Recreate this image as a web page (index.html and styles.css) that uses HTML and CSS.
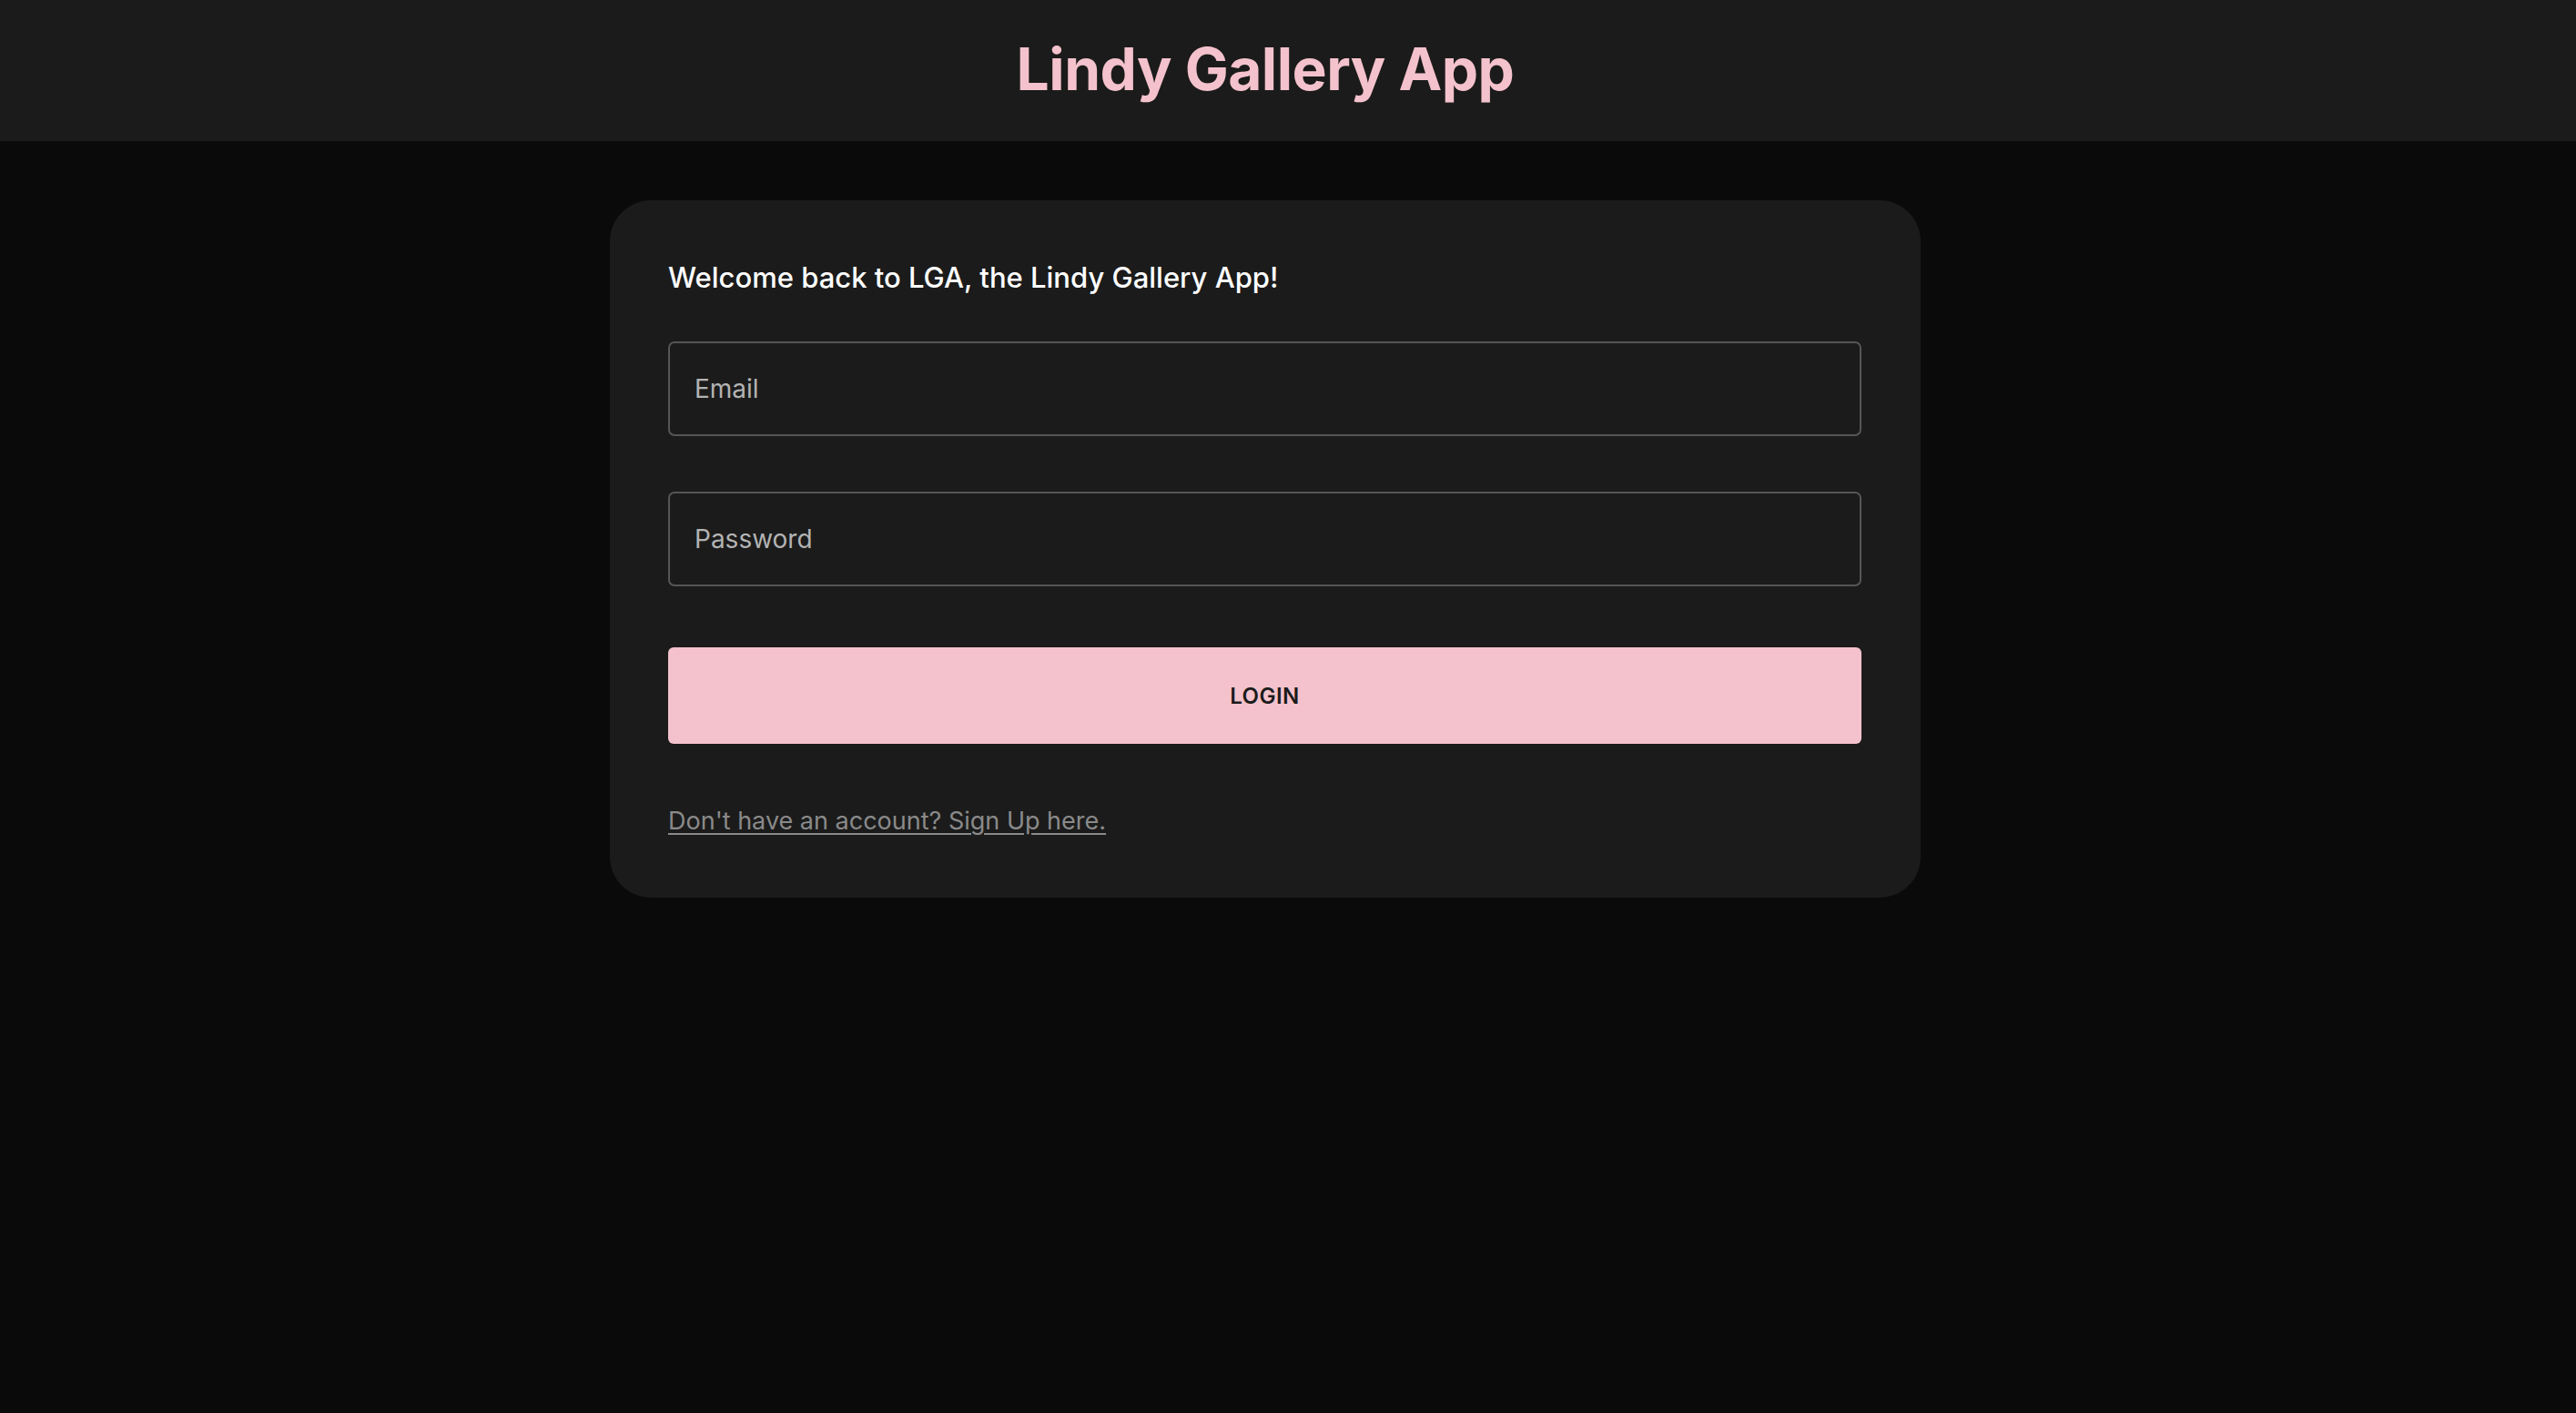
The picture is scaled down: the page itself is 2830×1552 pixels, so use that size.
FILE: index.html
```html
<!DOCTYPE html>
<html lang="en">
<head>
<meta charset="utf-8">
<title>Lindy Gallery App</title>
<link rel="stylesheet" href="styles.css">
</head>
<body>
<header class="topbar">
  <h1 class="app-title">Lindy Gallery App</h1>
</header>
<main class="main">
  <section class="card">
    <h2 class="welcome">Welcome back to LGA, the Lindy Gallery App!</h2>
    <form class="login-form">
      <input class="field" type="email" placeholder="Email">
      <input class="field" type="password" placeholder="Password">
      <button class="login-btn" type="button">LOGIN</button>
    </form>
    <a class="signup-link" href="#">Don't have an account? Sign Up here.</a>
  </section>
</main>
</body>
</html>
```
FILE: styles.css
```css
* { box-sizing: border-box; }
html, body { margin: 0; padding: 0; }
body {
  background: #0a0a0a;
  min-height: 100vh;
  font-family: Inter, Roboto, "Liberation Sans", sans-serif;
}
.topbar {
  height: 155px;
  background: #1b1b1b;
  display: flex;
  align-items: center;
  justify-content: center;
  padding: 0 50px 4px 0;
}
.app-title {
  margin: 0;
  font-size: 64px;
  font-weight: 700;
  color: #f4c2cc;
  line-height: 1;
  letter-spacing: -0.5px;
}
.main {
  display: flex;
  justify-content: center;
  padding: 65px 50px 0 0;
}
.card {
  width: 1440px;
  background: #1b1b1b;
  border-radius: 45px;
  padding: 66px 65px 68px 64px;
  display: flex;
  flex-direction: column;
}
.welcome {
  margin: 0;
  font-size: 31px;
  font-weight: 500;
  color: #ffffff;
  line-height: 1.2;
}
.login-form {
  display: flex;
  flex-direction: column;
  margin-top: 52px;
}
.field {
  height: 104px;
  background: #1b1b1b;
  border: 2px solid #555555;
  border-radius: 7px;
  padding: 0 27px;
  font-family: inherit;
  font-size: 28px;
  color: #eeeeee;
  outline: none;
}
.field + .field { margin-top: 61px; }
.field::placeholder { color: #b3b3b3; opacity: 1; }
.login-btn {
  margin-top: 67px;
  height: 106px;
  background: #f4c2cc;
  border: none;
  border-radius: 6px;
  font-family: inherit;
  font-size: 24px;
  font-weight: 600;
  color: #1b1b1b;
  letter-spacing: 0.5px;
}
.signup-link {
  margin-top: 68px;
  align-self: flex-start;
  font-size: 27px;
  color: #8a8a8a;
  text-decoration: underline;
  text-underline-offset: 4px;
}
```
